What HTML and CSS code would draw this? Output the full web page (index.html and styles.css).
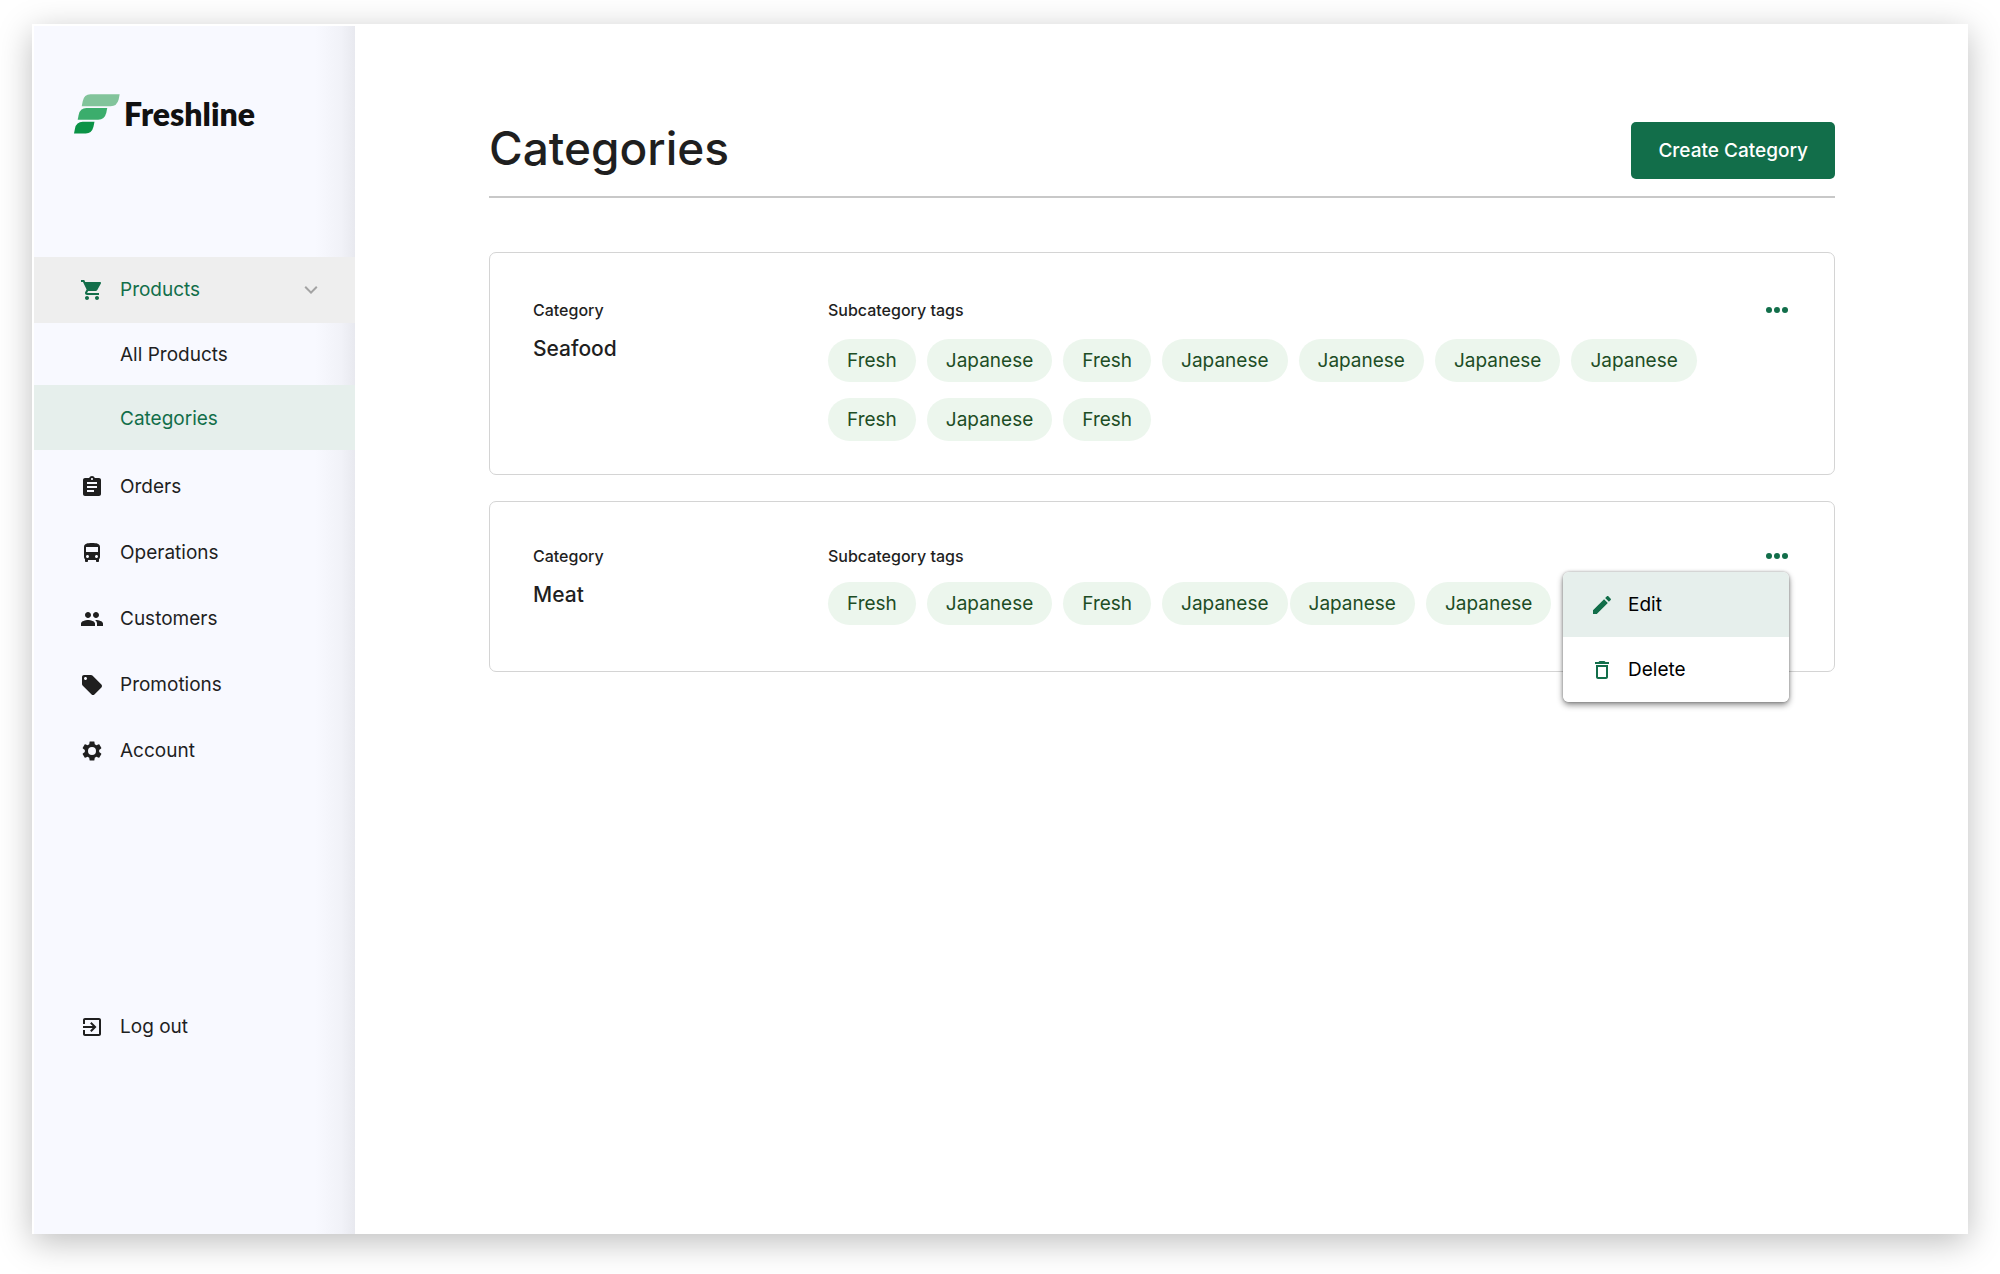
FILE: index.html
```html
<!DOCTYPE html>
<html lang="en">
<head>
<meta charset="utf-8">
<meta name="viewport" content="width=device-width, initial-scale=1">
<title>Categories – Freshline</title>
<link rel="stylesheet" href="styles.css">
</head>
<body>
<div class="window">
  <aside class="sidebar">
    <a class="logo" href="#">
      <svg class="logo-mark" viewBox="222 282 137 118" aria-hidden="true">
        <path fill="#82c49b" d="M245 318L248 303Q252 282 271 282H358L355 298Q350 318 331 318Z"/>
        <path fill="#3bad6c" d="M233 358L236 343Q240 323 259 323H321L318 338Q313 358 294 358Z"/>
        <path fill="#0b9347" d="M222 399L225 384Q229 364 248 364H283L280 379Q275 399 257 399Z"/>
      </svg>
      <span class="logo-text">Freshline</span>
    </a>
    <nav class="nav">
      <a class="nav-item nav-item--open" href="#">
        <svg class="icon" viewBox="0 0 24 24" aria-hidden="true"><path d="M7 18c-1.100 0-1.990.9-1.990 2S5.900 22 7 22s2-.9 2-2-.9-2-2-2zM1 2v2h2l3.600 7.590-1.350 2.450c-.16.28-.25.61-.25.960 0 1.100.9 2 2 2h12v-2H7.420c-.14 0-.25-.11-.25-.25l.03-.12.9-1.630h7.450c.75 0 1.410-.41 1.750-1.030l3.580-6.490c.08-.14.12-.31.12-.48 0-.55-.45-1-1-1H5.210l-.94-2H1zm16 16c-1.100 0-1.990.9-1.990 2s.89 2 1.990 2 2-.9 2-2-.9-2-2-2z"/></svg>
        Products
        <svg class="icon chevron" viewBox="0 0 24 24" aria-hidden="true"><path d="M17.090 8.090L12 13.170 6.910 8.090 5.500 9.500l6.500 6.500 6.500-6.500z"/></svg>
      </a>
      <div class="subnav">
        <a class="nav-item nav-item--sub" href="#">All Products</a>
        <a class="nav-item nav-item--sub nav-item--active" href="#" aria-current="page">Categories</a>
      </div>
      <a class="nav-item" href="#">
        <svg class="icon" viewBox="0 0 24 24" aria-hidden="true"><path d="M19 3h-4.180C14.400 1.840 13.300 1 12 1c-1.300 0-2.400.84-2.820 2H5c-1.100 0-2 .9-2 2v14c0 1.100.9 2 2 2h14c1.100 0 2-.9 2-2V5c0-1.100-.9-2-2-2zm-7 0c.55 0 1 .45 1 1s-.45 1-1 1-1-.45-1-1 .45-1 1-1zm2 14H7v-2h7v2zm3-4H7v-2h10v2zm0-4H7V7h10v2z"/></svg>
        Orders
      </a>
      <a class="nav-item" href="#">
        <svg class="icon" viewBox="0 0 24 24" aria-hidden="true"><path d="M4 16c0 .88.39 1.670 1 2.220V20c0 .55.45 1 1 1h1c.55 0 1-.45 1-1v-1h8v1c0 .55.45 1 1 1h1c.55 0 1-.45 1-1v-1.780c.61-.55 1-1.340 1-2.220V6c0-3.500-3.580-4-8-4s-8 .5-8 4v10zm3.500 1c-.83 0-1.500-.67-1.500-1.500S6.670 14 7.500 14s1.500.67 1.500 1.500S8.330 17 7.500 17zm9 0c-.83 0-1.500-.67-1.500-1.500s.67-1.500 1.500-1.500 1.500.67 1.500 1.500-.67 1.500-1.500 1.500zm1.500-6H6V6h12v5z"/></svg>
        Operations
      </a>
      <a class="nav-item" href="#">
        <svg class="icon" viewBox="0 0 24 24" aria-hidden="true"><path d="M16 11c1.660 0 2.990-1.340 2.990-3S17.660 5 16 5c-1.660 0-3 1.340-3 3s1.340 3 3 3zm-8 0c1.660 0 2.990-1.340 2.990-3S9.660 5 8 5C6.340 5 5 6.340 5 8s1.340 3 3 3zm0 2c-2.330 0-7 1.170-7 3.500V19h14v-2.500c0-2.330-4.670-3.500-7-3.500zm8 0c-.29 0-.62.02-.97.05 1.160.84 1.970 1.970 1.970 3.450V19h6v-2.500c0-2.330-4.670-3.500-7-3.500z"/></svg>
        Customers
      </a>
      <a class="nav-item" href="#">
        <svg class="icon" viewBox="0 0 24 24" aria-hidden="true"><path d="M21.410 11.580l-9-9C12.050 2.220 11.550 2 11 2H4c-1.100 0-2 .9-2 2v7c0 .55.22 1.050.59 1.420l9 9c.36.36.86.58 1.410.58.55 0 1.050-.22 1.410-.59l7-7c.37-.36.59-.86.59-1.410 0-.55-.23-1.060-.59-1.420zM5.500 7C4.670 7 4 6.330 4 5.500S4.670 4 5.500 4 7 4.670 7 5.500 6.330 7 5.500 7z"/></svg>
        Promotions
      </a>
      <a class="nav-item" href="#">
        <svg class="icon" viewBox="0 0 24 24" aria-hidden="true"><path d="M19.140 12.940c.04-.3.06-.61.06-.94 0-.32-.02-.64-.07-.94l2.030-1.580c.18-.14.23-.41.12-.61l-1.920-3.320c-.12-.22-.37-.29-.59-.22l-2.390.96c-.5-.38-1.030-.7-1.620-.94l-.36-2.540c-.04-.24-.24-.41-.48-.41h-3.840c-.24 0-.43.17-.47.41l-.36 2.540c-.59.24-1.130.57-1.620.94l-2.390-.96c-.22-.08-.47 0-.59.22L2.740 8.870c-.12.21-.08.47.12.61l2.030 1.580c-.05.3-.09.63-.09.94s.02.64.07.94l-2.030 1.580c-.18.14-.23.41-.12.61l1.920 3.320c.12.22.37.29.59.22l2.390-.96c.5.38 1.030.7 1.620.94l.36 2.540c.05.24.24.41.48.41h3.840c.24 0 .44-.17.47-.41l.36-2.540c.59-.24 1.130-.56 1.620-.94l2.390.96c.22.08.47 0 .59-.22l1.920-3.320c.12-.22.07-.47-.12-.61l-2.010-1.580zM12 16a4 4 0 1 1 0-8 4 4 0 0 1 0 8z"/></svg>
        Account
      </a>
      <a class="nav-item nav-item--logout" href="#">
        <svg class="icon" viewBox="0 0 24 24" aria-hidden="true"><path d="M10.090 15.590L11.500 17l5-5-5-5-1.410 1.410L12.670 11H3v2h9.670l-2.580 2.590zM19 3H5c-1.110 0-2 .9-2 2v4h2V5h14v14H5v-4H3v4c0 1.100.89 2 2 2h14c1.100 0 2-.9 2-2V5c0-1.100-.9-2-2-2z"/></svg>
        Log out
      </a>
    </nav>
  </aside>

  <main class="main">
    <header class="page-header">
      <h1 class="page-title">Categories</h1>
      <button class="create-button" type="button">Create Category</button>
    </header>

    <section class="card card--tall">
      <div class="card-name">
        <p class="label">Category</p>
        <h2 class="name">Seafood</h2>
      </div>
      <div class="card-tags">
        <p class="label">Subcategory tags</p>
        <ul class="tags">
          <li class="tag">Fresh</li>
          <li class="tag">Japanese</li>
          <li class="tag">Fresh</li>
          <li class="tag">Japanese</li>
          <li class="tag">Japanese</li>
          <li class="tag">Japanese</li>
          <li class="tag">Japanese</li>
          <li class="tag">Fresh</li>
          <li class="tag">Japanese</li>
          <li class="tag">Fresh</li>
        </ul>
      </div>
      <div class="actions">
        <button class="more-button" type="button" aria-label="More actions for Seafood">
          <svg class="icon" viewBox="0 0 24 24" aria-hidden="true"><circle cx="4" cy="12" r="3"/><circle cx="12" cy="12" r="3"/><circle cx="20" cy="12" r="3"/></svg>
        </button>
      </div>
    </section>

    <section class="card">
      <div class="card-name">
        <p class="label">Category</p>
        <h2 class="name">Meat</h2>
      </div>
      <div class="card-tags">
        <p class="label">Subcategory tags</p>
        <div class="tag-groups">
          <ul class="tags">
            <li class="tag">Fresh</li>
            <li class="tag">Japanese</li>
            <li class="tag">Fresh</li>
            <li class="tag">Japanese</li>
          </ul>
          <ul class="tags">
            <li class="tag">Japanese</li>
            <li class="tag">Japanese</li>
          </ul>
        </div>
      </div>
      <div class="actions">
        <button class="more-button" type="button" aria-label="More actions for Meat" aria-expanded="true">
          <svg class="icon" viewBox="0 0 24 24" aria-hidden="true"><circle cx="4" cy="12" r="3"/><circle cx="12" cy="12" r="3"/><circle cx="20" cy="12" r="3"/></svg>
        </button>
        <div class="menu">
          <button class="menu-item menu-item--hover" type="button">
            <svg class="icon" viewBox="0 0 24 24" aria-hidden="true"><path d="M3 17.250V21h3.750L17.810 9.940l-3.750-3.750L3 17.250zM20.710 7.040c.39-.39.39-1.020 0-1.410l-2.340-2.340c-.39-.39-1.020-.39-1.410 0l-1.830 1.830 3.750 3.750 1.830-1.830z"/></svg>
            Edit
          </button>
          <button class="menu-item" type="button">
            <svg class="icon" viewBox="0 0 24 24" aria-hidden="true"><path d="M6 19c0 1.100.9 2 2 2h8c1.100 0 2-.9 2-2V7H6v12zM8 9h8v10H8V9zm7.500-5l-1-1h-5l-1 1H5v2h14V4z"/></svg>
            Delete
          </button>
        </div>
      </div>
    </section>
  </main>
</div>
</body>
</html>
```

FILE: styles.css
```css
:root {
  --green: #126e4a;
  --mint: #e6efec;
  --ink: #1f1f1f;
}

* {
  box-sizing: border-box;
}

body {
  margin: 0;
  padding: 24px 32px 40px;
  background: #fff;
  color: var(--ink);
  font-family: Inter, "Liberation Sans", sans-serif;
  font-size: 19px;
  line-height: 24px;
}

a {
  color: inherit;
  text-decoration: none;
}

button {
  margin: 0;
  border: 0;
  font: inherit;
  cursor: pointer;
}

h1,
h2,
p,
ul {
  margin: 0;
  padding: 0;
}

.icon {
  flex: none;
  width: 24px;
  height: 24px;
  fill: currentColor;
}

.window {
  display: flex;
  min-height: calc(100vh - 64px);
  border: solid #fff;
  border-width: 2px 0 0 2px;
  background: #fff;
  box-shadow: 0 8px 32px rgba(0, 0, 0, 0.26);
}

/* Sidebar */
.sidebar {
  flex: none;
  width: 321px;
  padding-top: 68px;
  background: linear-gradient(to left, #e8e9ef, #f1f2f8 14px, #f8f9ff 40px);
}

.logo {
  display: flex;
  align-items: center;
  gap: 4px;
  height: 40px;
  margin: 0 0 123px 40px;
}

.logo-mark {
  width: 46px;
  height: 40px;
}

.logo-text {
  color: #111;
  font-family: Lato, sans-serif;
  font-size: 32px;
  font-weight: 800;
}

.nav-item {
  display: flex;
  align-items: center;
  gap: 16px;
  height: 66px;
  padding: 0 32px 0 46px;
}

.nav-item--open {
  background: #eee;
  color: var(--green);
}

.chevron {
  margin-left: auto;
  color: #a3a3a3;
}

.subnav {
  margin-bottom: 4px;
}

.nav-item--sub {
  height: 62px;
  padding-top: 2px;
  padding-left: 86px;
}

.nav-item--active {
  height: 65px;
  background: var(--mint);
  color: var(--green);
}

.nav-item--logout {
  margin-top: 210px;
}

/* Content */
.main {
  flex: 1;
  min-width: 0;
  padding: 96px 133px 96px 134px;
}

.page-header {
  display: flex;
  align-items: flex-start;
  justify-content: space-between;
  margin-bottom: 54px;
  padding-bottom: 17px;
  border-bottom: 2px solid #c8c8c8;
}

.page-title {
  font-size: 46px;
  font-weight: 500;
  line-height: 52px;
}

.create-button {
  height: 57px;
  padding: 0 27px;
  border-radius: 5px;
  background: var(--green);
  color: #fff;
  font-weight: 500;
}

.card {
  display: grid;
  grid-template-columns: 295px minmax(0, 1fr) 24px;
  margin-bottom: 26px;
  padding: 42px 45px 46px 43px;
  border: 1px solid #d4d4d4;
  border-radius: 7px;
}

.card--tall {
  padding-top: 45px;
  padding-bottom: 33px;
}

.card-name,
.card-tags {
  display: flex;
  flex-direction: column;
}

.card-name {
  gap: 13px;
}

.card-tags {
  gap: 14px;
}

.card--tall .card-tags {
  gap: 17px;
}

.label {
  font-size: 16px;
  font-weight: 500;
}

.name {
  font-size: 21px;
  font-weight: 500;
  line-height: 28px;
}

.tag-groups {
  display: flex;
  flex-wrap: wrap;
  gap: 16px 2px;
}

.tags {
  display: flex;
  flex-wrap: wrap;
  gap: 16px 11px;
  list-style: none;
}

.tag {
  padding: 10px 19px 9px;
  border-radius: 22px;
  background: #ecf6ed;
  color: #1d4d25;
}

.actions {
  position: relative;
}

.more-button {
  display: block;
  padding: 0;
  background: none;
  color: var(--green);
}

.more-button .icon {
  display: block;
}

.menu {
  position: absolute;
  z-index: 1;
  top: 28px;
  right: 0;
  width: 226px;
  overflow: hidden;
  border-radius: 6px;
  background: #fff;
  box-shadow: 0 3px 6px rgba(0, 0, 0, 0.45), 0 0 3px rgba(0, 0, 0, 0.3);
}

.menu-item {
  display: flex;
  align-items: center;
  gap: 14px;
  width: 100%;
  height: 65px;
  padding: 0 27px;
  background: #fff;
  color: #000;
  text-align: left;
}

.menu-item .icon {
  color: var(--green);
}

.menu-item--hover {
  background: var(--mint);
}
```
